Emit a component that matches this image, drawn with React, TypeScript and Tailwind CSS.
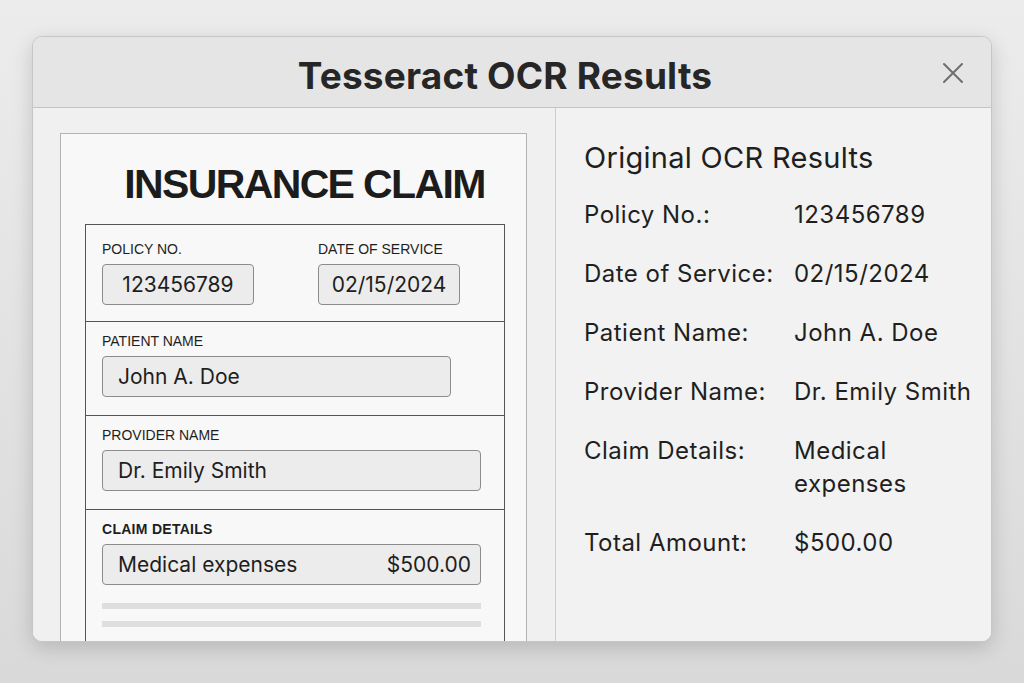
import React from 'react';

const ui = { fontFamily: 'Inter, "Noto Sans", sans-serif' };
const form = { fontFamily: '"Liberation Sans", Arial, sans-serif' };

interface FieldProps {
  label: string;
  width: string;
  bold?: boolean;
  children: React.ReactNode;
}

const Field: React.FC<FieldProps> = ({ label, width, bold, children }) => (
  <div>
    <div style={form} className={`text-[14px] leading-[17px] text-[#1e1e1e] ${bold ? 'font-semibold tracking-[0.02em]' : ''}`}>{label}</div>
    <div
      style={ui}
      className={`mt-[6px] h-[41px] ${width} rounded-[4px] border border-[#8c8c8c] bg-[#ececec] flex items-center px-[15px] text-[21px] text-[#1e1e1e]`}
    >
      {children}
    </div>
  </div>
);

const results: [string, React.ReactNode][] = [
  ['Policy No.:', '123456789'],
  ['Date of Service:', '02/15/2024'],
  ['Patient Name:', 'John A. Doe'],
  ['Provider Name:', 'Dr. Emily Smith'],
  ['Claim Details:', <>Medical<br />expenses</>],
  ['Total Amount:', '$500.00'],
];

export default function App() {
  return (
    <div className="w-[1024px] h-[683px] overflow-hidden bg-gradient-to-b from-[#ececec] to-[#d9d9d9] pt-[36px] pl-[32px]">
      <div className="w-[960px] h-[606px] rounded-[10px] border border-[#c6c6c6] bg-[#f1f1f1] shadow-[0_6px_20px_rgba(0,0,0,0.16)] overflow-hidden flex flex-col">
        {/* title bar */}
        <div className="relative h-[71px] shrink-0 bg-[#e5e5e5] border-b border-[#c4c4c4] flex items-center justify-center pt-[8px]">
          <h1 style={ui} className="mr-[14px] text-[37px] leading-[44px] font-bold text-[#262626] tracking-[0.005em]">Tesseract OCR Results</h1>
          <button className="absolute right-[26px] top-[24px] w-[24px] h-[24px] flex items-center justify-center text-[#6e6e6e]">
            <svg width="22" height="22" viewBox="0 0 22 22" fill="none" stroke="currentColor" strokeWidth="2" strokeLinecap="round">
              <path d="M2 2L20 20M20 2L2 20" />
            </svg>
          </button>
        </div>

        <div className="flex flex-1 min-h-0">
          {/* scanned document */}
          <div className="w-[523px] shrink-0 border-r border-[#cdcdcd] bg-[#f0f0f0] pl-[27px] pt-[25px]">
            <div className="w-[467px] h-[620px] border border-[#b3b3b3] bg-[#f8f8f8] pt-[26px]">
              <h2 style={form} className="pl-[22px] text-center text-[41px] leading-[48px] font-bold tracking-[-0.04em] text-[#1c1c1c]">INSURANCE CLAIM</h2>
              <div className="ml-[24px] mt-[16px] w-[420px] h-[600px] border border-[#555]">
                <div className="h-[97px] border-b border-[#555] pt-[16px] pl-[16px] flex gap-[64px]">
                  <Field label="POLICY NO." width="w-[152px] justify-center">123456789</Field>
                  <Field label="DATE OF SERVICE" width="w-[142px] justify-center">02/15/2024</Field>
                </div>
                <div className="h-[94px] border-b border-[#555] pt-[11px] pl-[16px]">
                  <Field label="PATIENT NAME" width="w-[349px]">John A. Doe</Field>
                </div>
                <div className="h-[94px] border-b border-[#555] pt-[11px] pl-[16px]">
                  <Field label="PROVIDER NAME" width="w-[379px]">Dr. Emily Smith</Field>
                </div>
                <div className="pt-[11px] pl-[16px]">
                  <Field label="CLAIM DETAILS" width="w-[379px] justify-between !pr-[9px]" bold>
                    <span>Medical expenses</span>
                    <span>$500.00</span>
                  </Field>
                  <div className="mt-[18px] w-[379px] h-[6px] bg-[#dedede]" />
                  <div className="mt-[12px] w-[379px] h-[6px] bg-[#dedede]" />
                </div>
              </div>
            </div>
          </div>

          {/* extracted values */}
          <div style={ui} className="flex-1 bg-[#f2f2f2] pl-[28px] pt-[31px] text-[#1f1f1f]">
            <h3 className="text-[29px] leading-[37px] font-normal tracking-[0.01em]">Original OCR Results</h3>
            <div className="mt-[22px] grid grid-cols-[210px_1fr] gap-y-[26px] text-[24px] leading-[33px] tracking-[0.02em]">
              {results.map(([k, v]) => (
                <React.Fragment key={k}>
                  <div>{k}</div>
                  <div>{v}</div>
                </React.Fragment>
              ))}
            </div>
          </div>
        </div>
      </div>
    </div>
  );
}
